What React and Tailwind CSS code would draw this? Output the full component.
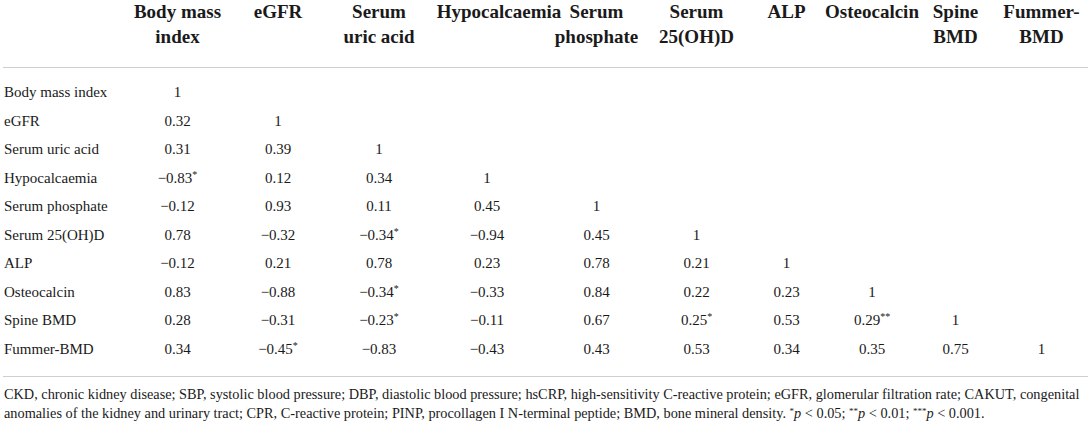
const headers = [
  ["Body mass", "index"],
  ["eGFR"],
  ["Serum", "uric acid"],
  ["Hypocalcaemia"],
  ["Serum", "phosphate"],
  ["Serum", "25(OH)D"],
  ["ALP"],
  ["Osteocalcin"],
  ["Spine", "BMD"],
  ["Fummer-", "BMD"],
]

const rows = [
  ["Body mass index", ["1"]],
  ["eGFR", ["0.32", "1"]],
  ["Serum uric acid", ["0.31", "0.39", "1"]],
  ["Hypocalcaemia", ["−0.83*", "0.12", "0.34", "1"]],
  ["Serum phosphate", ["−0.12", "0.93", "0.11", "0.45", "1"]],
  ["Serum 25(OH)D", ["0.78", "−0.32", "−0.34*", "−0.94", "0.45", "1"]],
  ["ALP", ["−0.12", "0.21", "0.78", "0.23", "0.78", "0.21", "1"]],
  ["Osteocalcin", ["0.83", "−0.88", "−0.34*", "−0.33", "0.84", "0.22", "0.23", "1"]],
  ["Spine BMD", ["0.28", "−0.31", "−0.23*", "−0.11", "0.67", "0.25*", "0.53", "0.29**", "1"]],
  ["Fummer-BMD", ["0.34", "−0.45*", "−0.83", "−0.43", "0.43", "0.53", "0.34", "0.35", "0.75", "1"]],
]

const grid = "grid grid-cols-[126px_103px_98px_104px_112px_107px_93px_87px_84px_83px_89px]"

const Value = ({ v }) => {
  const m = v.match(/^([^*]*)(\**)$/)
  return (
    <span>
      {m[1]}
      {m[2] && <sup className="text-[10px]">{m[2]}</sup>}
    </span>
  )
}

export default function App() {
  return (
    <div className="w-[1091px] h-[425px] bg-white text-[#1a1a1a] overflow-hidden font-['Liberation_Serif','Times_New_Roman',serif]">
      {/* header */}
      <div className={`${grid} pb-[18px] text-[19px] font-bold leading-[24.5px]`}>
        <div />
        {headers.map((h, i) => (
          <div key={i} className={`flex flex-col items-center whitespace-nowrap ${i === 3 ? "pl-[24px]" : ""}`}>
            {h.map((line, j) => <span key={j}>{line}</span>)}
          </div>
        ))}
      </div>
      <div className="mx-[3px] h-px bg-[#cfcfcf]" />

      {/* body */}
      <div className="pt-[10px] pb-[13px] text-[15px] leading-[28.5px]">
        {rows.map(([label, vals]) => (
          <div key={label} className={grid}>
            <div className="pl-[4px] whitespace-nowrap">{label}</div>
            {vals.map((v, i) => (
              <div key={i} className="text-center whitespace-nowrap">
                <Value v={v} />
              </div>
            ))}
          </div>
        ))}
      </div>
      <div className="mx-[3px] h-px bg-[#cfcfcf]" />

      {/* footnote */}
      <div className="pl-[4px] pt-[8px] text-[14.3px] leading-[19px] whitespace-nowrap">
        CKD, chronic kidney disease; SBP, systolic blood pressure; DBP, diastolic blood pressure; hsCRP, high-sensitivity C-reactive protein; eGFR, glomerular filtration rate; CAKUT, congenital
        <br />
        anomalies of the kidney and urinary tract; CPR, C-reactive protein; PINP, procollagen I N-terminal peptide; BMD, bone mineral density.{" "}
        <sup className="text-[9px]">*</sup><i>p</i> &lt; 0.05; <sup className="text-[9px]">**</sup><i>p</i> &lt; 0.01; <sup className="text-[9px]">***</sup><i>p</i> &lt; 0.001.
      </div>
    </div>
  )
}
